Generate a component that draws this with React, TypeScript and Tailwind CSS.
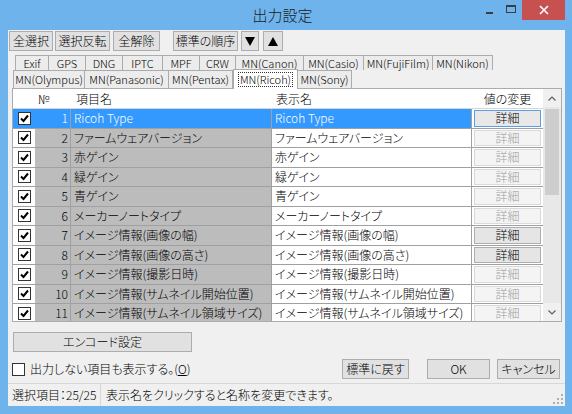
import React from "react";

const rows: { n: number; name: string; enabled: boolean }[] = [
  { n: 1, name: "Ricoh Type", enabled: true },
  { n: 2, name: "ファームウェアバージョン", enabled: false },
  { n: 3, name: "赤ゲイン", enabled: false },
  { n: 4, name: "緑ゲイン", enabled: false },
  { n: 5, name: "青ゲイン", enabled: false },
  { n: 6, name: "メーカーノートタイプ", enabled: false },
  { n: 7, name: "イメージ情報(画像の幅)", enabled: true },
  { n: 8, name: "イメージ情報(画像の高さ)", enabled: true },
  { n: 9, name: "イメージ情報(撮影日時)", enabled: false },
  { n: 10, name: "イメージ情報(サムネイル開始位置)", enabled: false },
  { n: 11, name: "イメージ情報(サムネイル領域サイズ)", enabled: false },
];

const tabs1: [string, number][] = [
  ["Exif", 34],
  ["GPS", 38],
  ["DNG", 38],
  ["IPTC", 41],
  ["MPF", 38],
  ["CRW", 37],
  ["MN(Canon)", 69],
  ["MN(Casio)", 61],
  ["MN(FujiFilm)", 70],
  ["MN(Nikon)", 61],
];

function Btn({ children, w, className = "" }: { children: React.ReactNode; w: number; className?: string }) {
  return (
    <div
      className={
        "h-[20px] flex items-center justify-center border border-[#adadad] bg-[#e1e1e1] text-[#000] whitespace-nowrap " +
        className
      }
      style={{ width: w }}
    >
      {children}
    </div>
  );
}

function Check({ checked }: { checked: boolean }) {
  return (
    <div className="w-[13px] h-[13px] border border-[#333333] bg-white flex items-center justify-center">
      {checked && (
        <svg width="11" height="11" viewBox="0 0 11 11">
          <path d="M2 5.5 L4.5 8 L9 2.5" stroke="#000" strokeWidth="2" fill="none" />
        </svg>
      )}
    </div>
  );
}

export default function App() {
  return (
    <div
      className="w-[572px] h-[414px] bg-[#6fb3ec] flex flex-col text-[12px] font-light text-black leading-none [font-feature-settings:'palt']"
      style={{ fontFamily: '"Noto Sans CJK JP", sans-serif' }}
    >
      {/* Title bar */}
      <div className="h-[30px] flex">
        <div className="flex-1" />
        <div className="pt-[7px] text-[15px] text-[#1a1a1a]">出力設定</div>
        <div className="flex-1 flex justify-end pr-[7px]">
          <div className="w-[22px] h-[20px] flex items-center justify-center">
            <div className="w-[7px] h-[2px] bg-[#3c3c3c] mt-[6px]" />
          </div>
          <div className="w-[22px] h-[20px] flex items-center justify-center">
            <div className="w-[10px] h-[8px] border border-[#3c3c3c] border-t-2 mb-[2px]" />
          </div>
          <div className="w-[43px] h-[20px] bg-[#c75050] flex items-center justify-center">
            <svg width="10" height="10" viewBox="0 0 10 10">
              <path d="M1 1 L9 9 M9 1 L1 9" stroke="#fff" strokeWidth="1.6" />
            </svg>
          </div>
        </div>
      </div>

      {/* Client */}
      <div className="ml-[8px] mr-[7px] h-[376px] bg-[#f0f0f0] flex flex-col">
        {/* toolbar */}
        <div className="flex mt-[1px] ml-[1px]">
          <Btn w={44}>全選択</Btn>
          <Btn w={55} className="ml-[2px]">選択反転</Btn>
          <Btn w={47} className="ml-[3px]">全解除</Btn>
          <Btn w={65} className="ml-[13px]">標準の順序</Btn>
          <Btn w={18} className="ml-[3px]">
            <svg width="10" height="9" viewBox="0 0 10 9"><path d="M0 0 H10 L5 9 Z" fill="#000" /></svg>
          </Btn>
          <Btn w={20} className="ml-[4px]">
            <svg width="10" height="9" viewBox="0 0 10 9"><path d="M0 9 H10 L5 0 Z" fill="#000" /></svg>
          </Btn>
        </div>

        {/* tabs */}
        <div className="mt-[4px] flex ml-[7px] h-[15px] text-[11px]">
          {tabs1.map(([t, w]) => (
            <div
              key={t}
              className="h-[15px] border border-b-0 border-[#acacac] -mr-[1px] bg-[#ececec] flex items-center justify-center whitespace-nowrap"
              style={{ width: w }}
            >
              {t}
            </div>
          ))}
        </div>
        <div className="flex ml-[5px] h-[18px] items-end text-[11px]">
          <div className="h-[18px] w-[72px] border border-b-0 border-[#acacac] bg-[#ececec] flex items-center justify-center whitespace-nowrap">MN(Olympus)</div>
          <div className="h-[18px] w-[84px] border border-b-0 border-l-0 border-[#acacac] bg-[#ececec] flex items-center justify-center whitespace-nowrap">MN(Panasonic)</div>
          <div className="h-[18px] w-[64px] border border-b-0 border-l-0 border-[#acacac] bg-[#ececec] flex items-center justify-center whitespace-nowrap">MN(Pentax)</div>
          <div className="h-[20px] w-[65px] border border-b-0 border-[#acacac] bg-white flex items-center justify-center relative z-10 -mb-[1px] whitespace-nowrap">
            <span className="border border-dotted border-[#333] px-[1px] py-[1px]">MN(Ricoh)</span>
          </div>
          <div className="h-[18px] w-[54px] border border-b-0 border-l-0 border-[#acacac] bg-[#ececec] flex items-center justify-center whitespace-nowrap">MN(Sony)</div>
        </div>

        {/* grid area */}
        <div className="ml-[4px] mr-[3px] h-[234px] border border-[#acacac] bg-white flex">
          <div className="flex-1 flex flex-col overflow-hidden">
            {/* header */}
            <div className="h-[20px] flex items-center border-b border-[#d5d5d5] shrink-0">
              <div className="w-[22px]" />
              <div className="w-[36px] pl-[3px]">№</div>
              <div className="w-[201px] pl-[5px]">項目名</div>
              <div className="w-[200px] pl-[4px]">表示名</div>
              <div className="flex-1 text-center">値の変更</div>
            </div>
            {rows.map((r) => {
              const sel = r.n === 1;
              return (
                <div key={r.n} className="h-[19.5px] shrink-0 flex border-b border-[#a0a0a0]">
                  <div className={"w-[22px] flex items-center justify-center " + (sel ? "bg-[#3399ff]" : "bg-white")}>
                    <Check checked />
                  </div>
                  <div
                    className={
                      "w-[36px] flex items-center justify-end pr-[2px] border-r border-[#a0a0a0] " +
                      (sel ? "bg-[#3399ff] text-white" : "bg-[#bcbcbc]")
                    }
                  >
                    {r.n}
                  </div>
                  <div
                    className={
                      "w-[201px] flex items-center pl-[3px] border-r border-[#a0a0a0] whitespace-nowrap overflow-hidden " +
                      (sel ? "bg-[#3399ff] text-white" : "bg-[#bcbcbc]")
                    }
                  >
                    {r.name}
                  </div>
                  <div
                    className={
                      "w-[200px] flex items-center pl-[3px] border-r border-[#a0a0a0] whitespace-nowrap overflow-hidden " +
                      (sel ? "bg-[#3399ff] text-white" : "bg-white")
                    }
                  >
                    {r.name}
                  </div>
                  <div className="flex-1 flex items-center justify-center px-[2px] py-[1px] bg-white">
                    <div
                      className={
                        "w-full h-full flex items-center justify-center border " +
                        (r.enabled
                          ? sel
                            ? "border-[#5a9ee6] bg-[#e8e8e8] text-black"
                            : "border-[#adadad] bg-[#e5e5e5] text-black"
                          : "border-[#d9d9d9] bg-[#f4f4f4] text-[#a0a0a0]")
                      }
                    >
                      詳細
                    </div>
                  </div>
                </div>
              );
            })}
          </div>
          {/* scrollbar */}
          <div className="w-[18px] bg-[#e8e8e8] flex flex-col items-center">
            <div className="h-[18px] w-full bg-[#f0f0f0] flex items-center justify-center">
              <svg width="8" height="5" viewBox="0 0 8 5"><path d="M0.5 4.5 L4 1 L7.5 4.5" stroke="#606060" strokeWidth="1.2" fill="none" /></svg>
            </div>
            <div className="w-[14px] h-[86px] bg-[#cdcdcd] mt-[2px]" />
            <div className="flex-1" />
            <div className="h-[18px] w-full bg-[#f0f0f0] flex items-center justify-center">
              <svg width="8" height="5" viewBox="0 0 8 5"><path d="M0.5 0.5 L4 4 L7.5 0.5" stroke="#606060" strokeWidth="1.2" fill="none" /></svg>
            </div>
          </div>
        </div>

        {/* bottom */}
        <div className="flex mt-[10px] ml-[5px]">
          <Btn w={179}>エンコード設定</Btn>
        </div>
        <div className="flex items-center mt-[8px] ml-[4px] h-[18px]">
          <div className="w-[13px] h-[13px] border border-[#333] bg-white" />
          <div className="ml-[5px] whitespace-nowrap">
            出力しない項目も表示する。(<span className="underline">O</span>)
          </div>
          <div className="flex-1" />
          <Btn w={67}>標準に戻す</Btn>
          <Btn w={63} className="ml-[18px]">OK</Btn>
          <Btn w={63} className="ml-[7px] mr-[5px]">キャンセル</Btn>
        </div>
        <div className="mt-[5px] flex-1 border-t border-[#d7d7d7] flex items-center">
          <div className="w-[93px] pl-[4px] border-r border-[#d7d7d7] h-full flex items-center whitespace-nowrap">
            選択項目：25/25
          </div>
          <div className="pl-[5px] whitespace-nowrap">表示名をクリックすると名称を変更できます。</div>
          <div className="flex-1" />
          <svg width="10" height="10" viewBox="0 0 10 10" className="mr-[2px] self-end mb-[2px]">
            <rect x="8" y="0" width="2" height="2" fill="#b0b0b0" />
            <rect x="4" y="4" width="2" height="2" fill="#b0b0b0" />
            <rect x="8" y="4" width="2" height="2" fill="#b0b0b0" />
            <rect x="0" y="8" width="2" height="2" fill="#b0b0b0" />
            <rect x="4" y="8" width="2" height="2" fill="#b0b0b0" />
            <rect x="8" y="8" width="2" height="2" fill="#b0b0b0" />
          </svg>
        </div>
      </div>
    </div>
  );
}
